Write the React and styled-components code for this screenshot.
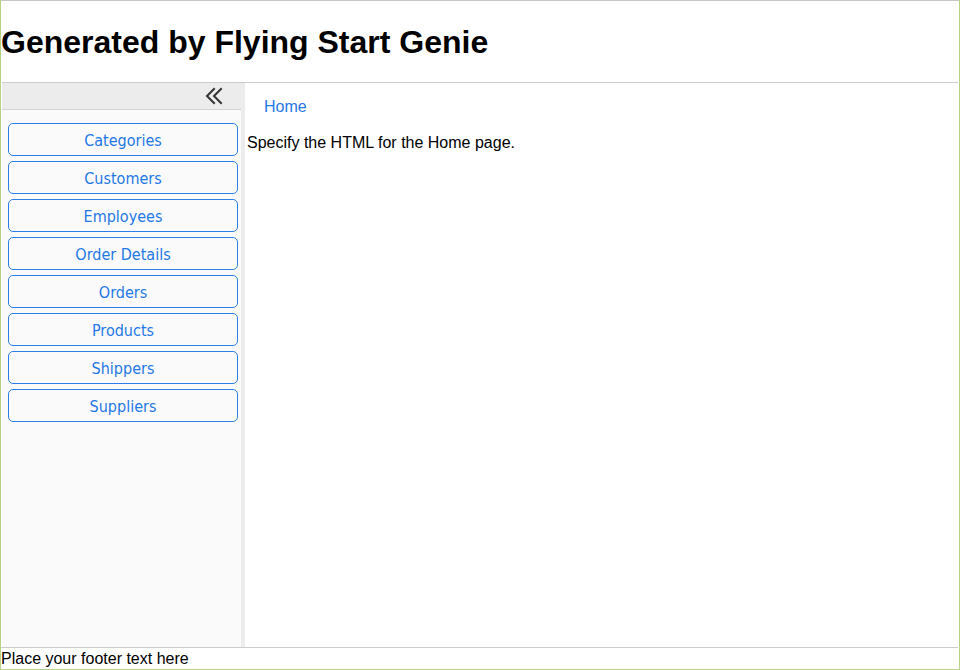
import styled, { createGlobalStyle } from "styled-components"

const GlobalStyle = createGlobalStyle`
  html, body {
    margin: 0;
    padding: 0;
    background: #fff;
  }
  body {
    font-family: "Liberation Sans", Arial, sans-serif;
    font-size: 16px;
    color: #000;
  }
`

// 外框
const StyledFrame = styled.div`
  box-sizing: border-box;
  width: 960px;
  height: 670px;
  display: flex;
  flex-direction: column;
  border-top: 1px solid #c6c6c6;
  border-left: 1px solid #b7d486;
  border-right: 1px solid #b7d486;
  border-bottom: 1px solid #b7d486;
  padding: 0 1px 0 1px;
`

const StyledHeader = styled.header`
  height: 81px;
  display: flex;
  align-items: center;
  border-bottom: 1px solid #cccccc;

  h1 {
    margin: 2px 0 0 -1px;
    font-size: 32px;
    font-weight: bold;
    font-family: "Liberation Sans", Arial, sans-serif;
  }
`

const StyledBody = styled.div`
  flex: 1;
  display: flex;
  min-height: 0;
`

// 側邊欄
const StyledSidebar = styled.nav`
  width: 239px;
  background-color: #fafafa;
  border-right: 4px solid #ececec;
  display: flex;
  flex-direction: column;
`

const StyledSidebarTop = styled.div`
  height: 26px;
  background-color: #ececec;
  border-bottom: 1px solid #d2d2d2;
  display: flex;
  justify-content: flex-end;
  align-items: center;
  padding-right: 18px;
  color: #333;
`

const StyledMenu = styled.ul`
  list-style: none;
  margin: 0;
  padding: 13px 0 0 6px;
  display: flex;
  flex-direction: column;
  gap: 5px;
`

const StyledMenuButton = styled.a`
  box-sizing: border-box;
  display: flex;
  justify-content: center;
  align-items: center;
  width: 230px;
  height: 33px;
  padding-top: 2px;
  border: 1px solid #2a7fe8;
  border-radius: 5px;
  background: #fafafa;
  color: #1f78e6;
  font-family: "DejaVu Sans Condensed", "DejaVu Sans", sans-serif;
  font-size: 16px;
  text-decoration: none;
  cursor: pointer;
`

const StyledMain = styled.main`
  flex: 1;
  padding: 0 2px;
`

const StyledCrumb = styled.div`
  height: 47px;
  display: flex;
  align-items: center;
  padding-left: 17px;
  color: #1f78e6;
`

const StyledContent = styled.p`
  margin: 4px 0 0 0;
`

const StyledFooter = styled.footer`
  height: 21px;
  border-top: 1px solid #cccccc;
  display: flex;
  align-items: center;
  margin-left: -1px;
`

const CollapseIcon = () => (
  <svg width="18" height="18" viewBox="0 0 18 18" fill="none" stroke="#333" strokeWidth="2" strokeLinecap="square">
    <polyline points="9,2 2,9 9,16" />
    <polyline points="16,2 9,9 16,16" />
  </svg>
)

const menu = ['Categories', 'Customers', 'Employees', 'Order Details', 'Orders', 'Products', 'Shippers', 'Suppliers']

const App = () => {
  return (
    <>
      <GlobalStyle />
      <StyledFrame>
        <StyledHeader>
          <h1>Generated by Flying Start Genie</h1>
        </StyledHeader>
        <StyledBody>
          <StyledSidebar>
            <StyledSidebarTop>
              <CollapseIcon />
            </StyledSidebarTop>
            <StyledMenu>
              {menu.map(item => (
                <li key={item}>
                  <StyledMenuButton>{item}</StyledMenuButton>
                </li>
              ))}
            </StyledMenu>
          </StyledSidebar>
          <StyledMain>
            <StyledCrumb>Home</StyledCrumb>
            <StyledContent>Specify the HTML for the Home page.</StyledContent>
          </StyledMain>
        </StyledBody>
        <StyledFooter>Place your footer text here</StyledFooter>
      </StyledFrame>
    </>
  )
}

export default App
